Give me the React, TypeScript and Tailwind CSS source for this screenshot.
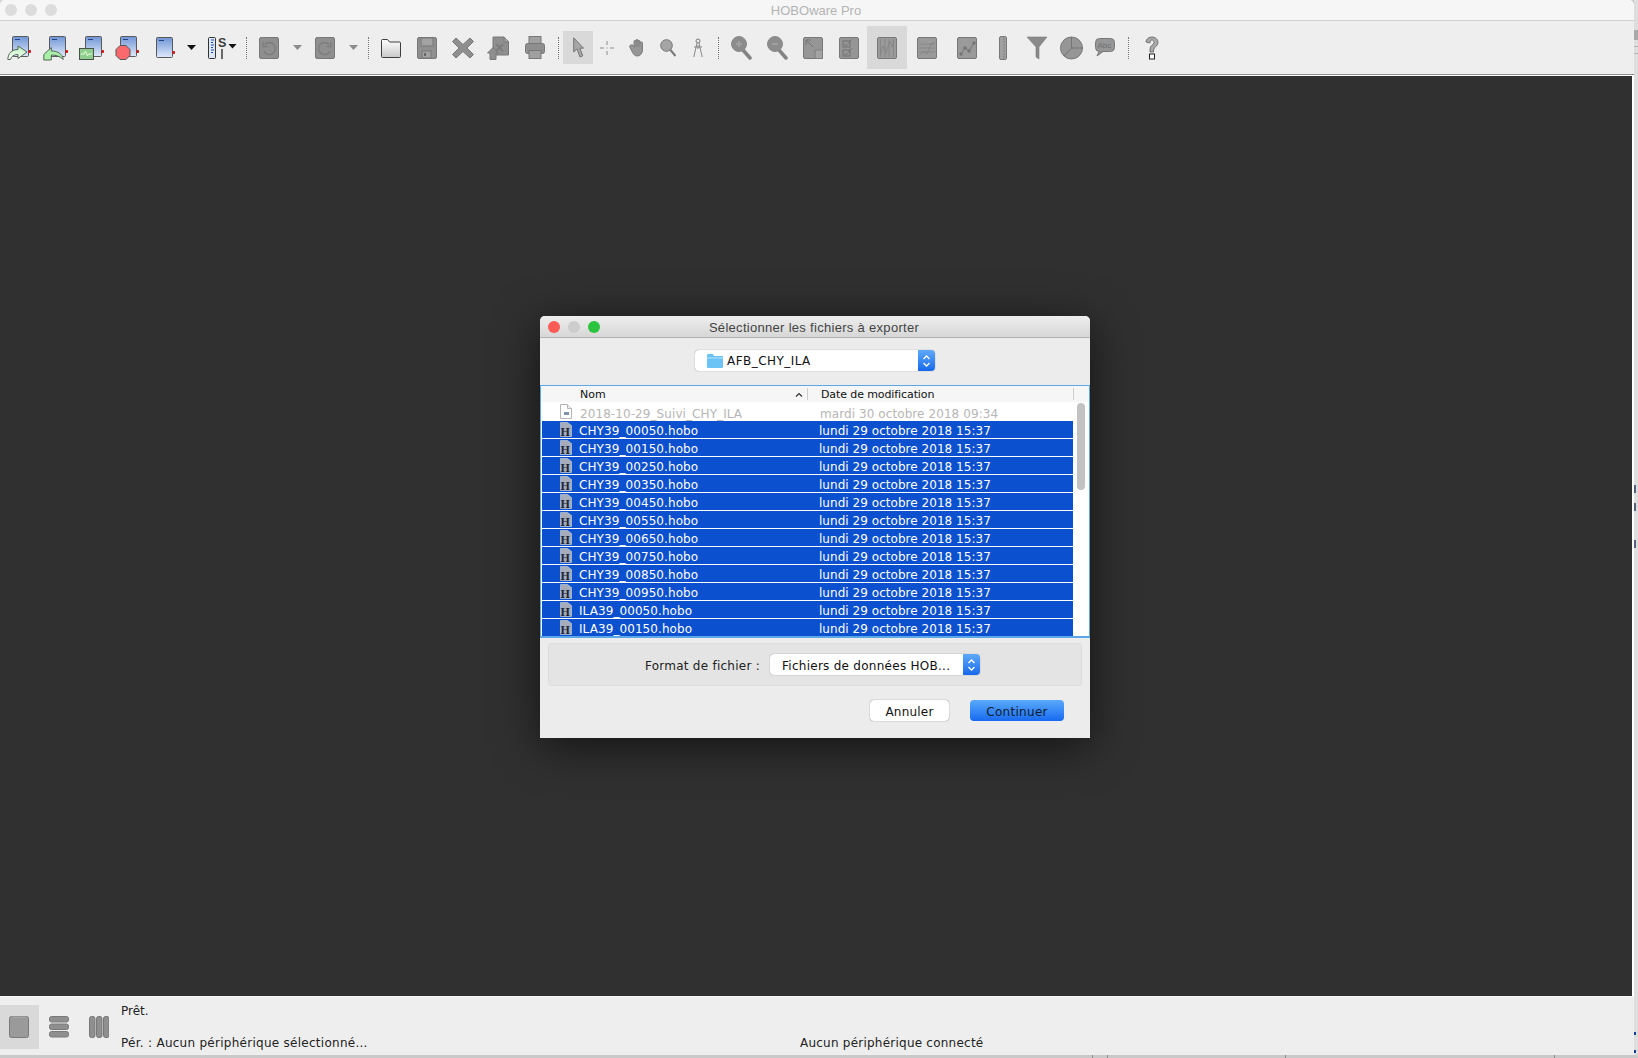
import React from "react";

const GF = "#8f8f8f";
const GS = "#787878";

function Device({ id, x = 0, y = 0 }: { id: string; x?: number; y?: number }) {
  return (
    <g transform={`translate(${x} ${y})`}>
      <defs>
        <linearGradient id={id} x1="0" y1="0" x2="0" y2="1">
          <stop offset="0" stopColor="#6f95d6" />
          <stop offset="1" stopColor="#dfe9fa" />
        </linearGradient>
      </defs>
      <rect x="0.5" y="0.5" width="16" height="20" rx="1" fill={`url(#${id})`} stroke="#5a5a5a" />
      <path d="M3 3.5h5" stroke="#22408a" strokeWidth="1" />
      <rect x="16.5" y="14" width="2.5" height="3" rx="1" fill="#d5100f" />
    </g>
  );
}

function I1() {
  return (
    <svg width="24" height="26" className="ml-[7px]" viewBox="0 0 24 26">
      <Device id="d1" x={5} y={1} />
      <defs>
        <linearGradient id="a1" x1="0" y1="0" x2="0" y2="1">
          <stop offset="0" stopColor="#bdf2bd" />
          <stop offset="1" stopColor="#f6fff4" />
        </linearGradient>
      </defs>
      <path d="M0.800 24.500C1 18 5 14.500 11 14.500V11l9 6-9 6.500v-4C7 19.500 4.500 21 3.500 24.500z" fill="url(#a1)" stroke="#4a574a" strokeWidth="0.900" />
    </svg>
  );
}
function I2() {
  return (
    <svg width="25" height="26" className="ml-[12px]" viewBox="0 0 25 26">
      <Device id="d2" x={6} y={1} />
      <path d="M0.800 19.500l7.500-7v3.500c6 0 11 2.500 12 8.500-3-3-7-4.500-12-4.500v5H0.800z" fill="#a8f0a6" stroke="#4a574a" strokeWidth="0.900" />
    </svg>
  );
}
function I3() {
  return (
    <svg width="25" height="26" className="ml-[11px]" viewBox="0 0 25 26">
      <Device id="d3" x={6} y={1} />
      <rect x="0.500" y="13.500" width="14" height="11" fill="#8fce90" stroke="#4a554a" />
      <path d="M2 19h3l1.500-3 2 5 1-2h3.500" stroke="#e8ffd8" fill="none" />
    </svg>
  );
}
function I4() {
  return (
    <svg width="24" height="26" className="ml-[11px]" viewBox="0 0 24 26">
      <Device id="d4" x={5} y={1} />
      <path d="M5 10.500h6l4 4v6l-4 4H5l-4-4v-6z" fill="#f9696e" stroke="#565656" />
    </svg>
  );
}
function I5() {
  return (
    <svg width="19" height="24" className="ml-[17px]" viewBox="0 0 19 24">
      <Device id="d5" x={0} y={1} />
    </svg>
  );
}
function Caret({ c = "#111", ml }: { c?: string; ml: string }) {
  return (
    <svg width="9" height="5" className={ml} viewBox="0 0 9 5">
      <path d="M0 0h9L4.500 5z" fill={c} />
    </svg>
  );
}
function I6() {
  return (
    <svg width="29" height="24" className="ml-[12px]" viewBox="0 0 29 24">
      <rect x="0.500" y="1.500" width="7" height="21" rx="1" fill="#dce6f5" stroke="#333" />
      <path d="M3 4h3M3 6.500h2M3 9h3M3 11.500h2M3 14h3M3 16.500h2" stroke="#1f4fa8" />
      <text x="10" y="10.500" fontSize="12.500" fontWeight="700" fill="#3c3c3c" fontFamily="Liberation Sans, sans-serif">S</text>
      <path d="M14 13v10" stroke="#3c3c3c" strokeWidth="1.500" />
      <path d="M20.500 8h8L24.500 12.500z" fill="#111" />
    </svg>
  );
}
function Sep({ ml }: { ml: string }) {
  return <div className={`${ml} h-[22px] w-px border-l border-dotted border-[#777]`} />;
}
function Undo({ flip, ml }: { flip?: boolean; ml: string }) {
  return (
    <svg width="20" height="22" className={ml} viewBox="0 0 20 22">
      <rect x="0.500" y="0.500" width="19" height="21" rx="1.500" fill={GF} stroke={GS} />
      <g transform={flip ? "matrix(-1 0 0 1 20 0)" : undefined}>
        <path d="M6 7.500A6 6 0 1 1 5 14" fill="none" stroke="#7c7c7c" strokeWidth="1.300" />
        <path d="M4 5v4.500h4.500" fill="none" stroke="#7c7c7c" strokeWidth="1.300" />
      </g>
    </svg>
  );
}
function Folder() {
  return (
    <svg width="20" height="20" className="ml-[12px]" viewBox="0 0 20 20">
      <defs>
        <linearGradient id="fo" x1="0" y1="0" x2="0" y2="1">
          <stop offset="0" stopColor="#ffffff" />
          <stop offset="1" stopColor="#c9c9c9" />
        </linearGradient>
      </defs>
      <path d="M0.500 18.500V2.500q0-1 1-1h5l2 2.500h10q1 0 1 1v13.500q0 1-1 1h-17q-1 0-1-1z" fill="url(#fo)" stroke="#3d3d3d" />
    </svg>
  );
}
function Save() {
  return (
    <svg width="20" height="22" className="ml-[16px]" viewBox="0 0 20 22">
      <rect x="0.500" y="0.500" width="19" height="21" rx="1.500" fill={GF} stroke={GS} />
      <rect x="4" y="1" width="12" height="8" fill="#a2a2a2" stroke={GS} />
      <rect x="5" y="14" width="9" height="7" fill="#a2a2a2" stroke={GS} />
      <rect x="7" y="16" width="2" height="3" fill="#666" />
    </svg>
  );
}
function XIco() {
  return (
    <svg width="22" height="22" className="ml-[15px]" viewBox="0 0 22 22">
      <path d="M4 1l7 6.500L18 1l3.500 3.500L15 11l6.500 6.500L18 21l-7-6.500L4 21 .5 17.500 7 11 .5 4.500z" fill={GF} stroke={GS} />
    </svg>
  );
}
function Export() {
  return (
    <svg width="22" height="24" className="ml-[13px]" viewBox="0 0 22 24">
      <path d="M6 1h11l4.500 4.500V19H6z" fill={GF} stroke={GS} />
      <path d="M17 1v5h4.500" fill="#a5a5a5" stroke={GS} />
      <path d="M9 8l7 7M16 8l-7 7" stroke="#7d7d7d" strokeWidth="2" />
      <path d="M0.500 17L6 11.500 11.500 17H9v6.500H3V17z" fill={GF} stroke={GS} />
    </svg>
  );
}
function Print() {
  return (
    <svg width="20" height="23" className="ml-[16px]" viewBox="0 0 20 23">
      <rect x="4" y="0.500" width="12" height="7" fill="#a0a0a0" stroke={GS} />
      <rect x="0.500" y="7.500" width="19" height="10" rx="2" fill={GF} stroke={GS} />
      <rect x="4" y="14.500" width="12" height="8" fill="#a0a0a0" stroke={GS} />
    </svg>
  );
}
function ArrowTool() {
  return (
    <svg width="11" height="21" viewBox="0 0 11 21">
      <path d="M0.700 0.800V15l3.300-3 3 8 2.800-1.200-3-7.600H10.500z" fill="#a6a6a6" stroke="#767676" />
    </svg>
  );
}
function CrossTool() {
  return (
    <svg width="14" height="14" className="ml-[7px]" viewBox="0 0 14 14">
      <path d="M0 7h4M10 7h4M7 0v4M7 10v4" stroke="#8a8a8a" />
      <rect x="6.500" y="6.500" width="1" height="1" fill="#8a8a8a" />
    </svg>
  );
}
function Hand() {
  return (
    <svg width="16" height="18" className="ml-[15px]" viewBox="0 0 16 18">
      <path d="M3 6c1-.5 1.500 1 2 2V2.500c0-1.500 2-1.500 2 0V1.500c0-1.500 2-1.500 2 0v1c0-1.500 2-1.500 2 0V4c0-1.500 2.500-1.500 2.500 0v7c0 3-2 6-5 6-2.500 0-3.500-1-5-3.500L.8 8C.300 6.500 2 5.500 3 6z" fill="#969696" stroke="#767676" strokeWidth="0.900" />
      <path d="M7 2v6M9 2v6M11 3v5" stroke="#767676" strokeWidth="0.600" />
    </svg>
  );
}
function Mag() {
  return (
    <svg width="16" height="18" className="ml-[15px]" viewBox="0 0 16 18">
      <circle cx="6.500" cy="6.500" r="5.800" fill="#a5a5a5" stroke="#747474" />
      <path d="M10.500 11l5 6" stroke="#777" strokeWidth="2" />
    </svg>
  );
}
function Compass() {
  return (
    <svg width="10" height="20" className="ml-[17px]" viewBox="0 0 10 20">
      <circle cx="5" cy="3" r="2" fill="none" stroke="#777" />
      <path d="M4 5L0.800 19M6 5l3.200 14M1 9h8M5 7v4" stroke="#7d7d7d" strokeWidth="0.900" fill="none" />
    </svg>
  );
}
function Zoom({ minus, ml }: { minus?: boolean; ml: string }) {
  return (
    <svg width="21" height="24" className={ml} viewBox="0 0 21 24">
      <path d="M12 14l7 8" stroke="#838383" strokeWidth="3.500" strokeLinecap="round" />
      <circle cx="8" cy="8" r="7.500" fill="#8c8c8c" stroke="#8a8a8a" />
      {minus ? (
        <path d="M5 8h6" stroke="#a0a0a0" strokeWidth="2" />
      ) : (
        <path d="M5 8h6M8 5v6" stroke="#a0a0a0" strokeWidth="2" />
      )}
    </svg>
  );
}
function Fit() {
  return (
    <svg width="20" height="22" className="ml-[15px]" viewBox="0 0 20 22">
      <rect x="0.500" y="0.500" width="19" height="21" rx="1.500" fill="#969696" stroke={GS} />
      <path d="M3 3l7 7M3 3v5M3 3h5" stroke="#747474" fill="none" />
      <path d="M12 13h7.500v8.500H12z" fill="#a3a3a3" stroke="#7d7d7d" />
    </svg>
  );
}
function Checks() {
  return (
    <svg width="20" height="22" className="ml-[16px]" viewBox="0 0 20 22">
      <rect x="0.500" y="0.500" width="19" height="21" rx="1.500" fill="#969696" stroke={GS} />
      <rect x="4" y="4" width="7" height="6" fill="none" stroke="#707070" />
      <rect x="4" y="13" width="7" height="6" fill="none" stroke="#707070" />
      <path d="M5 7l2 2 6-7M5 16l2 2 6-7" fill="none" stroke="#707070" strokeWidth="0.800" />
    </svg>
  );
}
function Chart({ kind }: { kind: "bars" | "line" | "dots" }) {
  return (
    <svg width="20" height="22" viewBox="0 0 20 22">
      <rect x="0.500" y="0.500" width="19" height="21" rx="1.500" fill="#9a9a9a" stroke={GS} />
      {kind === "bars" && (
        <path d="M3.500 2v18M8 2v18M12 2v18M16.500 2v18M3 18l3-9 3 7 4-12 2 6 2-7" stroke="#7c7c7c" fill="none" strokeWidth="0.600" />
      )}
      {kind === "line" && (
        <path d="M2 7h16M2 11h16M2 15h16M2 19l5-5 3 3 4-10 4-2" stroke="#7c7c7c" fill="none" strokeWidth="0.600" />
      )}
      {kind === "dots" && (
        <g>
          <path d="M4 17l4-6 4 3 5-8" stroke="#747474" fill="none" />
          <circle cx="4" cy="17" r="1.700" fill="#747474" />
          <circle cx="8" cy="11" r="1.700" fill="#747474" />
          <circle cx="12" cy="14" r="1.700" fill="#747474" />
          <circle cx="17" cy="6" r="1.700" fill="#747474" />
        </g>
      )}
    </svg>
  );
}
function Ruler() {
  return (
    <svg width="8" height="24" className="ml-[22px]" viewBox="0 0 8 24">
      <rect x="0.500" y="0.500" width="7" height="23" rx="1.500" fill="#a0a0a0" stroke={GS} />
      <path d="M4 3h2M4 6h2M4 9h2M4 12h2M4 15h2M4 18h2M4 21h2" stroke="#747474" strokeWidth="0.700" />
    </svg>
  );
}
function Funnel() {
  return (
    <svg width="20" height="24" className="ml-[20px]" viewBox="0 0 20 24">
      <path d="M0 1h20L12 11v12l-3-2V11z" fill="#8a8a8a" stroke="#7a7a7a" strokeWidth="0.600" />
    </svg>
  );
}
function Pie() {
  return (
    <svg width="23" height="24" className="ml-[13px]" viewBox="0 0 23 24">
      <circle cx="11.500" cy="12" r="11" fill="#969696" stroke={GS} />
      <path d="M11.500 12V1M11.500 12H22.500M11.500 12L4 20" stroke="#747474" fill="none" />
    </svg>
  );
}
function Abc() {
  return (
    <svg width="20" height="21" className="ml-[12px]" viewBox="0 0 20 21">
      <rect x="0.500" y="1.500" width="19" height="13" rx="4" fill="#969696" stroke={GS} />
      <path d="M4 14.500L2 19l6-4.500" fill="#969696" stroke={GS} />
      <text x="2.500" y="11" fontSize="8" fill="#707070" fontFamily="Liberation Sans, sans-serif">Abc</text>
    </svg>
  );
}
function Help() {
  return (
    <svg width="14" height="24" className="ml-[16px]" viewBox="0 0 14 24">
      <path d="M1 6c0-3 3-5 6-5s6 2 6 5.500c0 4-4 4-4.500 7.500V16H5v-3C5 9 9 9 9 6.500 9 5 8 4 7 4S5 5 5 7z" fill="#a9a9a9" stroke="#5f5f5f" strokeWidth="0.800" />
      <rect x="4.500" y="18" width="5" height="5" fill="#fff" stroke="#222" />
    </svg>
  );
}

function FileIcon({ dim }: { dim?: boolean }) {
  if (dim) {
    return (
      <svg width="12" height="15" viewBox="0 0 12 15" className="shrink-0">
        <path d="M0.500 0.500h7l4 4v10h-11z" fill="#fff" stroke="#b5b5b5" />
        <path d="M7.500 0.500v4h4" fill="#eee" stroke="#b5b5b5" />
        <rect x="4" y="8" width="5" height="3" fill="#7f93a8" />
      </svg>
    );
  }
  return (
    <svg width="12" height="15" viewBox="0 0 12 15" className="shrink-0">
      <path d="M0.500 0.500h7l4 3v11h-11z" fill="#a6acb9" stroke="#cfd3da" strokeWidth="0.600" />
      <text x="0.500" y="13.500" fontSize="12" fontWeight="700" fill="#20243a" fontFamily="Liberation Serif, serif">H</text>
    </svg>
  );
}

function Stepper({ cls }: { cls: string }) {
  return (
    <div className={`${cls} flex items-center justify-center bg-gradient-to-b from-[#5fa9fb] to-[#1668ea]`}>
      <svg width="9" height="14" viewBox="0 0 9 14">
        <path d="M1.500 5L4.500 2l3 3M1.500 9l3 3 3-3" fill="none" stroke="#fff" strokeWidth="1.300" />
      </svg>
    </div>
  );
}

const NAMES = [
  "CHY39_00050.hobo",
  "CHY39_00150.hobo",
  "CHY39_00250.hobo",
  "CHY39_00350.hobo",
  "CHY39_00450.hobo",
  "CHY39_00550.hobo",
  "CHY39_00650.hobo",
  "CHY39_00750.hobo",
  "CHY39_00850.hobo",
  "CHY39_00950.hobo",
  "ILA39_00050.hobo",
  "ILA39_00150.hobo",
];

export default function App() {
  return (
    <div className="flex h-[1058px] w-[1638px] flex-col overflow-hidden bg-[#d6d6d6] font-['DejaVu_Sans',sans-serif] text-[12px] text-[#222]">
      <div className="flex h-[1055px] shrink-0">
        {/* main window */}
        <div className="flex w-[1634px] shrink-0 flex-col overflow-hidden rounded-t-[5px] bg-[#eeeeee] shadow-[1px_1px_2px_rgba(0,0,0,0.35)]">
          <div className="relative flex h-[21px] shrink-0 items-center border-b border-[#d0d0d0] bg-[#f6f6f6] pl-[5px]">
            <div className="h-3 w-3 rounded-full bg-[#dcdcdc]" />
            <div className="ml-2 h-3 w-3 rounded-full bg-[#dcdcdc]" />
            <div className="ml-2 h-3 w-3 rounded-full bg-[#dcdcdc]" />
            <div className="flex-1 pr-[59px] pt-px text-center font-['Liberation_Sans',sans-serif] text-[13px] text-[#b4b4b4]">
              HOBOware Pro
            </div>
          </div>
          <div className="flex h-[53px] shrink-0 items-center">
            <I1 />
            <I2 />
            <I3 />
            <I4 />
            <I5 />
            <Caret ml="ml-[12px]" />
            <I6 />
            <Sep ml="ml-[9px]" />
            <Undo ml="ml-[12px]" />
            <Caret c="#8b8b8b" ml="ml-[14px]" />
            <Undo flip ml="ml-[13px]" />
            <Caret c="#8b8b8b" ml="ml-[14px]" />
            <Sep ml="ml-[10px]" />
            <Folder />
            <Save />
            <XIco />
            <Export />
            <Print />
            <Sep ml="ml-[13px]" />
            <div className="ml-[4px] flex h-[33px] w-[30px] items-center justify-center bg-[#d9d9d9]">
              <ArrowTool />
            </div>
            <CrossTool />
            <Hand />
            <Mag />
            <Compass />
            <Sep ml="ml-[15px]" />
            <Zoom ml="ml-[12px]" />
            <Zoom minus ml="ml-[15px]" />
            <Fit />
            <Checks />
            <div className="ml-[8px] flex h-[43px] w-[40px] items-center justify-center bg-[#d9d9d9]">
              <Chart kind="bars" />
            </div>
            <div className="ml-[10px]">
              <Chart kind="line" />
            </div>
            <div className="ml-[20px]">
              <Chart kind="dots" />
            </div>
            <Ruler />
            <Funnel />
            <Pie />
            <Abc />
            <Sep ml="ml-[13px]" />
            <Help />
          </div>
          <div className="h-[2px] shrink-0 border-t border-[#8c8c8c] bg-white" />

          {/* canvas */}
          <div className="flex min-h-0 flex-1 border-r-2 border-white bg-[#303030] pl-[540px] pt-[240px]">
            <div className="flex h-[422px] w-[550px] flex-col overflow-hidden rounded-t-[5px] bg-[#ececec] shadow-[0_8px_45px_rgba(0,0,0,0.6)]">
              <div className="relative flex h-[22px] shrink-0 items-center border-b border-[#b2b2b2] bg-gradient-to-b from-[#eeeeee] to-[#d7d7d7] pl-2">
                <div className="h-3 w-3 rounded-full bg-[#fb5a55]" />
                <div className="ml-2 h-3 w-3 rounded-full bg-[#cdcdcd]" />
                <div className="ml-2 h-3 w-3 rounded-full bg-[#2cc33f]" />
                <div className="flex-1 pr-[62px] pt-[2px] text-center font-['Liberation_Sans',sans-serif] text-[13px] tracking-[0.3px] text-[#444]">
                  Sélectionner les fichiers à exporter
                </div>
              </div>
              <div className="ml-[155px] mt-3 flex h-[21px] w-[240px] shrink-0 overflow-hidden rounded-[4px] bg-white shadow-[0_0_1px_rgba(0,0,0,0.55)]">
                <div className="flex flex-1 items-center pl-[12px]">
                  <svg width="16" height="14" viewBox="0 0 16 14" className="shrink-0">
                    <path d="M0 13V1q0-1 1-1h5l1 2h8q1 0 1 1v10q0 1-1 1H1q-1 0-1-1z" fill="#6cc3f5" />
                    <path d="M0 4h16" stroke="#b8e4fb" />
                  </svg>
                  <span className="ml-1 tracking-[0.45px] text-[#111]">AFB_CHY_ILA</span>
                </div>
                <Stepper cls="w-[17px]" />
              </div>
              <div className="mt-[14px] flex h-[253px] shrink-0 flex-col border-x border-b-2 border-t border-[#5aa8e8] bg-white">
                <div className="flex h-4 shrink-0 items-center bg-[#f6f6f6] text-[11px] text-[#111]">
                  <span className="ml-[39px] w-[215px] pt-[2px]">Nom</span>
                  <svg width="8" height="5" viewBox="0 0 8 5" className="shrink-0">
                    <path d="M1 4.500l3-3 3 3" fill="none" stroke="#333" strokeWidth="1.200" />
                  </svg>
                  <div className="ml-1 h-3 w-px bg-[#cfcfcf]" />
                  <span className="ml-[13px] w-[252px] pt-[2px] tracking-[-0.1px]">Date de modification</span>
                  <div className="h-3 w-px bg-[#cfcfcf]" />
                </div>
                <div className="flex min-h-0 flex-1">
                  <div className="w-[532px] shrink-0 overflow-hidden pl-px pt-px">
                    <div className="mb-px flex h-[17px] items-center pl-[18px] text-[#b6b6b6]">
                      <FileIcon dim />
                      <span className="ml-2 w-[240px] pt-[4px] tracking-[0.08px]">2018-10-29_Suivi_CHY_ILA</span>
                      <span className="pt-[4px] tracking-[0.08px]">mardi 30 octobre 2018 09:34</span>
                    </div>
                    {NAMES.map((n) => (
                      <div key={n} className="mb-px flex h-[17px] items-center bg-[#0b50ce] pl-[18px] text-white">
                        <FileIcon />
                        <span className="ml-[7px] w-[240px] pt-[2px] tracking-[0.08px]">{n}</span>
                        <span className="pt-[2px] tracking-[0.04px]">lundi 29 octobre 2018 15:37</span>
                      </div>
                    ))}
                  </div>
                  <div className="flex-1 pl-1 pt-px">
                    <div className="h-[87px] w-2 rounded-full bg-[#c2c2c2]" />
                  </div>
                </div>
              </div>
              <div className="mx-2 mt-[5px] flex h-[43px] shrink-0 items-center rounded-[3px] border border-[#dedede] bg-[#e4e4e4] pl-[96px]">
                <span className="w-[125px] pt-[2px] tracking-[0.25px] text-[#222]">Format de fichier :</span>
                <div className="flex h-[21px] w-[210px] overflow-hidden rounded-[4px] bg-white shadow-[0_0_1px_rgba(0,0,0,0.55)]">
                  <span className="flex flex-1 items-center pl-3 pt-[2px] tracking-[0.27px] text-[#111]">Fichiers de données HOB...</span>
                  <Stepper cls="w-[17px]" />
                </div>
              </div>
              <div className="mt-[14px] flex justify-end pr-[26px]">
                <div className="flex h-[21px] w-[79px] items-center justify-center rounded-[4px] bg-white pt-[2px] tracking-[0.2px] text-[#111] shadow-[0_0_1px_rgba(0,0,0,0.7)]">
                  Annuler
                </div>
                <div className="ml-[21px] flex h-[21px] w-[94px] items-center justify-center rounded-[4px] bg-gradient-to-b from-[#5aa9fb] to-[#1769f0] pt-[2px] tracking-[0.3px] text-[#0e1c30]">
                  Continuer
                </div>
              </div>
            </div>
          </div>

          {/* status bar */}
          <div className="flex h-[59px] shrink-0 border-t border-[#f8f8f8] bg-[#eeeeee]">
            <div className="mt-2 flex h-11 w-[39px] items-center justify-center bg-[#d9d9d9] pr-[2px]">
              <svg width="20" height="22" viewBox="0 0 20 22">
                <rect x="0.500" y="0.500" width="19" height="21" rx="2" fill="#9a9a9a" stroke={GS} />
                <path d="M3 1h14" stroke="#b0b0b0" />
              </svg>
            </div>
            <svg width="20" height="22" viewBox="0 0 20 22" className="ml-[10px] mt-[19px]">
              <rect x="0.500" y="0.500" width="19" height="5.500" rx="2" fill={GF} stroke={GS} />
              <rect x="0.500" y="8" width="19" height="5.500" rx="2" fill={GF} stroke={GS} />
              <rect x="0.500" y="15.500" width="19" height="5.500" rx="2" fill={GF} stroke={GS} />
            </svg>
            <svg width="20" height="22" viewBox="0 0 20 22" className="ml-5 mt-[19px]">
              <rect x="0.500" y="0.500" width="5.500" height="21" rx="2" fill={GF} stroke={GS} />
              <rect x="7.500" y="0.500" width="5.500" height="21" rx="2" fill={GF} stroke={GS} />
              <rect x="14.500" y="0.500" width="5.500" height="21" rx="2" fill={GF} stroke={GS} />
            </svg>
            <div className="ml-3 flex w-[679px] flex-col justify-between pb-[3px] pt-[5px]">
              <span>Prêt.</span>
              <span className="tracking-[0.27px]">Pér. : Aucun périphérique sélectionné...</span>
            </div>
            <div className="flex flex-col justify-end pb-[3px]">
              <span className="tracking-[0.23px]">Aucun périphérique connecté</span>
            </div>
          </div>
        </div>

        {/* sliver of what lies behind the window */}
        <div className="flex flex-1 flex-col bg-[#dedede]">
          <div className="mt-[30px] h-[10px] bg-[#a9a9a9]" />
          <div className="mt-[6px] h-px bg-[#b5b5b5]" />
          <div className="mt-[6px] h-px bg-[#b5b5b5]" />
          <div className="mt-[431px] h-2 w-[2px] bg-[#55617a]" />
          <div className="mt-[10px] h-2 w-[2px] bg-[#55617a]" />
          <div className="mt-[29px] h-2 w-[2px] bg-[#55617a]" />
          <div className="mt-[484px] h-[3px] w-[2px] bg-[#123f9a]" />
          <div className="mt-[15px] h-[3px] w-[2px] bg-[#123f9a]" />
        </div>
      </div>
      <div className="flex h-[3px] bg-[#c9c9c9]">
        <div className="ml-[1092px] h-full w-px bg-[#8f8f8f]" />
        <div className="ml-[14px] h-full w-px bg-[#8f8f8f]" />
        <div className="ml-[177px] h-full w-px bg-[#8f8f8f]" />
        <div className="ml-[268px] h-full w-px bg-[#8f8f8f]" />
      </div>
    </div>
  );
}
